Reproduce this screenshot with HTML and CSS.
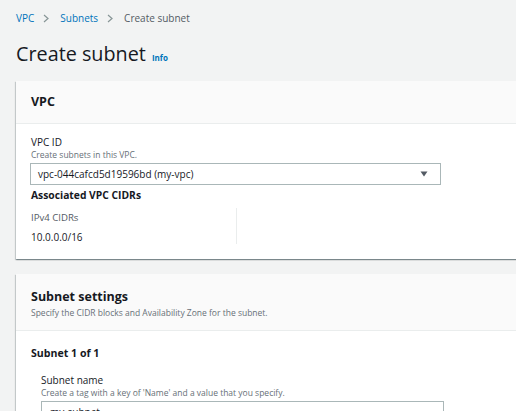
FILE: index.html
```html
<!DOCTYPE html>
<html lang="en">
<head>
<meta charset="utf-8">
<title>Create subnet</title>
<link rel="stylesheet" href="styles.css">
</head>
<body>
<div class="page">
  <nav class="crumbs">
    <a class="crumb-link">VPC</a>
    <svg class="chev" width="6" height="9" viewBox="0 0 6 9"><path d="M1 1l4 3.5L1 8" fill="none" stroke="#879596" stroke-width="1.2"/></svg>
    <a class="crumb-link">Subnets</a>
    <svg class="chev" width="6" height="9" viewBox="0 0 6 9"><path d="M1 1l4 3.5L1 8" fill="none" stroke="#879596" stroke-width="1.2"/></svg>
    <span class="crumb-current">Create subnet</span>
  </nav>

  <div class="title-row">
    <h1 class="title">Create subnet</h1>
    <span class="info">Info</span>
  </div>

  <section class="card">
    <div class="card-header">
      <h2 class="card-title">VPC</h2>
    </div>
    <div class="card-body vpc-body">
      <div class="field-label">VPC ID</div>
      <div class="field-desc">Create subnets in this VPC.</div>
      <div class="select">
        <span class="select-value">vpc-044cafcd5d19596bd (my-vpc)</span>
        <svg class="caret" width="8" height="6" viewBox="0 0 8 6"><path d="M0.5 0.5h7L4 5.5z" fill="#545b64"/></svg>
      </div>
      <div class="assoc-title">Associated VPC CIDRs</div>
      <div class="cidr-row">
        <div class="cidr-col">
          <div class="cidr-label">IPv4 CIDRs</div>
          <div class="cidr-value">10.0.0.0/16</div>
        </div>
      </div>
    </div>
  </section>

  <section class="card card-gap">
    <div class="card-header settings-header">
      <h2 class="card-title">Subnet settings</h2>
      <div class="card-desc">Specify the CIDR blocks and Availability Zone for the subnet.</div>
    </div>
    <div class="card-body settings-body">
      <h3 class="sub-title">Subnet 1 of 1</h3>
      <div class="nested">
        <div class="field-label">Subnet name</div>
        <div class="field-desc">Create a tag with a key of 'Name' and a value that you specify.</div>
        <div class="text-input">my-subnet</div>
      </div>
    </div>
  </section>
</div>
</body>
</html>
```

FILE: styles.css
```css
html, body {
  margin: 0;
  padding: 0;
}
body {
  background: #f2f3f3;
  font-family: "Open Sans", "Noto Sans", "Liberation Sans", sans-serif;
  color: #16191f;
  overflow: hidden;
  width: 516px;
  height: 411px;
}
.page {
  padding: 11px 0 0 16px;
}
.crumbs {
  display: flex;
  align-items: center;
  font-size: 10px;
  line-height: 14px;
  height: 14px;
}
.crumb-link {
  color: #0073bb;
}
.crumb-current {
  color: #545b64;
}
.chev {
  margin: 0 11px 0 9px;
  display: block;
}
.title-row {
  display: flex;
  align-items: baseline;
  margin-top: 17px;
}
.title {
  margin: 0;
  font-size: 19.8px;
  line-height: 24px;
  font-weight: 400;
  color: #16191f;
}
.info {
  margin-left: 6px;
  font-size: 8px;
  font-weight: 700;
  color: #0073bb;
}
.card {
  width: 620px;
  background: #fff;
  margin-top: 15px;
  box-shadow: 0 1px 1px 0 rgba(0, 28, 36, 0.3), 1px 1px 1px 0 rgba(0, 28, 36, 0.15), -1px 1px 1px 0 rgba(0, 28, 36, 0.15);
}
.card-gap {
  margin-top: 15px;
}
.card-header {
  background: #fafafa;
  border-bottom: 1px solid #eaeded;
  padding: 12px 15px;
}
.card-title {
  margin: 0;
  font-size: 12.5px;
  line-height: 18px;
  font-weight: 700;
  color: #16191f;
}
.settings-header {
  padding: 14px 15px 12px;
}
.settings-header .card-title {
  line-height: 17px;
}
.card-desc {
  margin-top: 2px;
  font-size: 8.5px;
  line-height: 11px;
  color: #687078;
}
.card-body {
  padding: 11px 15px 15px;
}
.field-label {
  font-size: 10px;
  line-height: 14px;
  color: #16191f;
}
.field-desc {
  font-size: 8.5px;
  line-height: 11px;
  color: #687078;
}
.select {
  box-sizing: border-box;
  width: 411px;
  height: 22px;
  margin: 3px 0 0 -1px;
  border: 1px solid #aab7b8;
  display: flex;
  align-items: center;
  justify-content: space-between;
  padding: 0 12px 0 7px;
  background: #fff;
}
.select-value {
  font-size: 10px;
  color: #16191f;
}
.caret {
  display: block;
}
.assoc-title {
  margin-top: 3px;
  font-size: 10.3px;
  line-height: 14px;
  font-weight: 700;
}
.cidr-row {
  display: flex;
  margin-top: 6px;
}
.cidr-col {
  width: 205px;
  border-right: 1px solid #eaeded;
  padding-top: 3px;
}
.cidr-label {
  font-size: 9.6px;
  line-height: 13px;
  color: #545b64;
}
.cidr-value {
  margin-top: 6px;
  font-size: 10px;
  line-height: 14px;
  color: #16191f;
}
.settings-body {
  padding: 14px 15px 20px;
}
.sub-title {
  margin: 0;
  font-size: 10.6px;
  line-height: 16px;
  font-weight: 700;
}
.nested {
  padding-left: 10px;
  margin-top: 12px;
}
.text-input {
  box-sizing: border-box;
  width: 403px;
  height: 22px;
  margin-top: 3px;
  border: 1px solid #aab7b8;
  padding: 0 8px;
  font-size: 10px;
  line-height: 20px;
  color: #16191f;
}
```
